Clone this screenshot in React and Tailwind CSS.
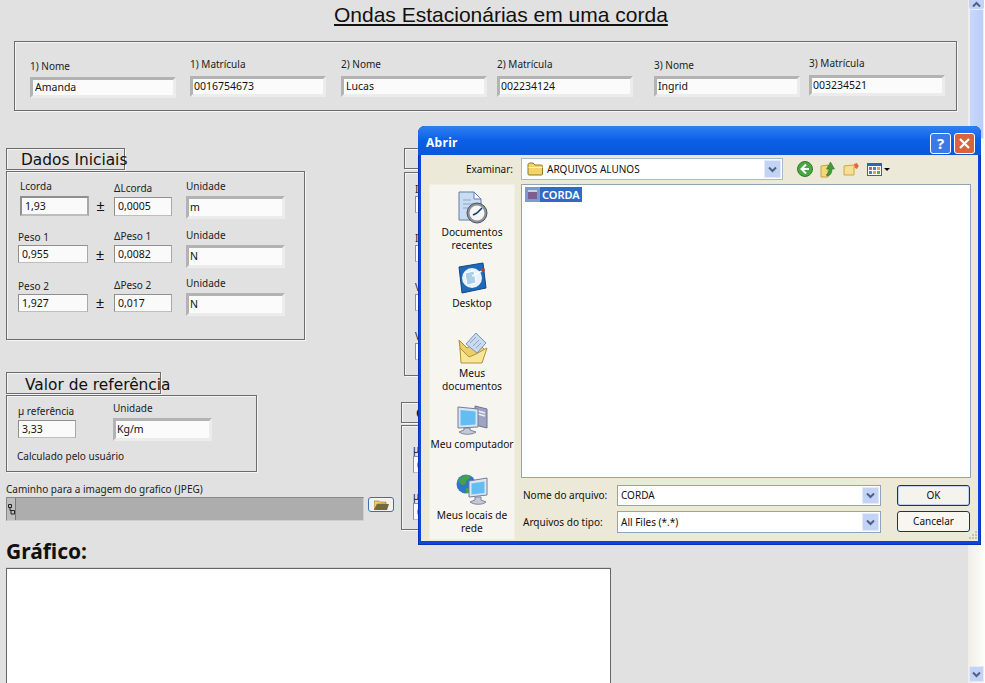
const students = [
  { label: '1) Nome', value: 'Amanda', cls: 'ml-[15px] mt-[17px] w-[146px]', gap: 'mt-[4px]', pad: 'pl-[2px]' },
  { label: '1) Matrícula', value: '0016754673', cls: 'ml-[14px] mt-[15px] w-[136px]', gap: 'mt-[5px]', pad: 'pl-[1px]' },
  { label: '2) Nome', value: 'Lucas', cls: 'ml-[15px] mt-[15px] w-[146px]', gap: 'mt-[5px]', pad: 'pl-[2px]' },
  { label: '2) Matrícula', value: '002234124', cls: 'ml-[10px] mt-[15px] w-[136px]', gap: 'mt-[5px]', pad: 'pl-[1px]' },
  { label: '3) Nome', value: 'Ingrid', cls: 'ml-[21px] mt-[16px] w-[146px]', gap: 'mt-[4px]', pad: 'pl-[1px]' },
  { label: '3) Matrícula', value: '003234521', cls: 'ml-[9px] mt-[14px] w-[136px]', gap: 'mt-[5px]', pad: 'pl-[1px]' },
]

const dados = [
  {
    h: 'h-[56px] pt-[7px]',
    a: { label: 'Lcorda', value: '1,93', cls: 'ml-[2px] w-[69px]', box: 'mt-[3px] h-[20px] border-2 border-[#6f6f6f]' },
    d: { label: 'ΔLcorda', value: '0,0005', cls: 'mt-[2px]', box: 'mt-[2px] h-[19px]' },
    u: { value: 'm', box: 'mt-[3px]' },
    pm: 'mt-[18px] w-[25px]',
  },
  {
    h: 'h-[48px]',
    a: { label: 'Peso 1', value: '0,955', cls: 'mt-[2px] w-[70px]', box: 'mt-px h-[18px]' },
    d: { label: 'ΔPeso 1', value: '0,0082', cls: 'mt-px', box: 'mt-[2px] h-[18px]' },
    u: { value: 'N', box: 'mt-[3px]' },
    pm: 'mt-[18px] w-[26px]',
  },
  {
    h: 'h-[48px]',
    a: { label: 'Peso 2', value: '1,927', cls: 'mt-[3px] w-[70px]', box: 'mt-px h-[18px]' },
    d: { label: 'ΔPeso 2', value: '0,017', cls: 'mt-[2px]', box: 'mt-[2px] h-[18px]' },
    u: { value: 'N', box: 'mt-[3px]' },
    pm: 'mt-[18px] w-[26px]',
  },
]

const places = [
  { icon: <RecentIcon />, lines: ['Documentos', 'recentes'] },
  { icon: <DesktopIcon />, lines: ['Desktop'] },
  { icon: <DocsIcon />, lines: ['Meus', 'documentos'] },
  { icon: <ComputerIcon />, lines: ['Meu computador'] },
  { icon: <NetworkIcon />, lines: ['Meus locais de', 'rede'] },
]

const panel = 'border border-[#6c6c6c] shadow-[inset_1px_1px_0_#f4f4f4,1px_1px_0_#f6f6f6]'
const numeric = 'flex items-center border border-[#8f8f8f] border-b-[#bdbdbd] border-r-[#a8a8a8] bg-[#fafafa] pl-[3px] pt-px text-[10.5px] text-[#111]'
const inset = 'flex items-center border-[3px] border-t-[#b3b3b3] border-l-[#b3b3b3] border-b-[#ececec] border-r-[#ececec] bg-[#fbfbfb] pl-[1px] text-[10.5px] text-[#111]'

function RecentIcon() {
  return (
    <svg width="33" height="33" viewBox="0 0 33 33">
      <path d="M3 1h15l7 7v21H3z" fill="#c9dcf2" stroke="#5e7fa8" />
      <path d="M18 1v7h7z" fill="#fff" stroke="#5e7fa8" />
      <path d="M7 9h8M7 13h12M7 17h8" stroke="#8ba6cb" />
      <circle cx="21" cy="22" r="10" fill="#8b9199" stroke="#4f5660" />
      <circle cx="21" cy="22" r="7.5" fill="#f5f7f2" />
      <path d="M21 22l5-5M21 22l-4 2" stroke="#1d3a70" strokeWidth="1.6" />
    </svg>
  )
}

function DesktopIcon() {
  return (
    <svg width="33" height="33" viewBox="0 0 33 33">
      <path d="M3 5L27 1l3 25-24 5z" fill="#1f69b8" stroke="#13477f" />
      <circle cx="16" cy="16" r="10" fill="#e9f3fb" />
      <path d="M9 11l9-2 2 12-9 2z" fill="#a9cdea" stroke="#fff" />
      <path d="M16 14l10-5" stroke="#f7fbff" strokeWidth="1.5" />
      <circle cx="27" cy="8" r="2" fill="#b0472c" />
    </svg>
  )
}

function DocsIcon() {
  return (
    <svg width="33" height="33" viewBox="0 0 33 33">
      <path d="M3 8l3 22h20l3-12-8-8-10 6z" fill="#eccf6b" stroke="#a98a35" />
      <path d="M10 12L20 1l10 10-9 10z" fill="#c9daf0" stroke="#7b93b7" />
      <path d="M14 11l6-6M17 14l6-6M20 16l5-5" stroke="#8ba7cc" />
      <path d="M5 31h21l5-15-11 6-7 3-9-9z" fill="#f8e595" stroke="#b2933d" />
    </svg>
  )
}

function ComputerIcon() {
  return (
    <svg width="33" height="33" viewBox="0 0 33 33">
      <path d="M19 3l12 3v19l-12-3z" fill="#9ea4c0" stroke="#6f7591" />
      <path d="M22 8l7 2M22 11l7 2" stroke="#eef0f7" strokeWidth="1.5" />
      <path d="M2 4l20 2v18L2 25z" fill="#d9e4f2" stroke="#6f7f9d" />
      <path d="M4.500 7l15 1.500v13l-15 1z" fill="#63bdf2" />
      <path d="M8 25v2l-5 2c4 3 13 3 17 0l-6-2v-2z" fill="#c5c9d6" stroke="#7f8498" />
    </svg>
  )
}

function NetworkIcon() {
  return (
    <svg width="33" height="34" viewBox="0 0 33 34">
      <circle cx="10" cy="11" r="9.5" fill="#2f76c9" />
      <path d="M3 6c4-4 9-5 11-3 1 3-3 3-4 6 0 3-3 4-5 2-2-1-3-3-2-5zM10 15c3 0 5 2 3 5h-3z" fill="#45a347" />
      <path d="M13 8l18-3v17l-18 2z" fill="#dbe6f3" stroke="#6f7f9d" />
      <path d="M15.500 10.500l13-2v11.500l-13 1.500z" fill="#63bdf2" />
      <path d="M19 24v3l-5 2c4 3 13 3 16 0l-5-2v-3z" fill="#c5c9d6" stroke="#7f8498" />
    </svg>
  )
}

function FolderIcon() {
  return (
    <svg width="17" height="14" viewBox="0 0 17 14">
      <path d="M1 2.500C1 1.500 2 1 3 1h3l2 2h6c1 0 1.500.5 1.500 1.500V12c0 .7-.5 1-1 1H2c-.6 0-1-.4-1-1z" fill="#f4d36c" stroke="#8f7422" />
      <path d="M1.500 5.500h14" stroke="#fdf2c2" />
    </svg>
  )
}

function Chevron({ color = '#4d6185' }) {
  return (
    <svg width="9" height="7" viewBox="0 0 9 7">
      <path d="M1 1.500l3.500 3.500L8 1.500" fill="none" stroke={color} strokeWidth="2" />
    </svg>
  )
}

function ComboArrow() {
  return (
    <div className="flex w-[17px] items-center justify-center rounded-[2px] bg-[#c3d3f6] shadow-[inset_0_0_0_1px_#e3ebfb]">
      <Chevron />
    </div>
  )
}

function Panel({ title, titleCls, textCls, children, cls }) {
  return (
    <div>
      <div className={`${panel} h-[22px] ${titleCls} whitespace-nowrap text-[15.4px] text-[#111] font-['DejaVu_Sans',sans-serif]`}>
        <span className={textCls}>{title}</span>
      </div>
      <div className={`${panel} ${cls}`}>{children}</div>
    </div>
  )
}

function Labeled({ label, cls, children }) {
  return (
    <div className={cls}>
      <div className="h-[14px] whitespace-nowrap text-[10px] leading-[14px] text-[#222]">{label}</div>
      {children}
    </div>
  )
}

function Scrollbar() {
  return (
    <aside className="flex h-[683px] w-[17px] shrink-0 flex-col bg-gradient-to-r from-[#efeee8] to-[#fdfdfa]">
      <div className="mx-px flex h-[9px] items-end justify-center overflow-hidden rounded-b-[2px] bg-[#c3d3f6]">
        <div className="rotate-180 pt-px"><Chevron /></div>
      </div>
      <div className="mx-px h-[130px] rounded-[2px] bg-gradient-to-r from-[#c9d8fb] to-[#b9cdf9] shadow-[inset_0_0_0_1px_#e6edfd]" />
      <div className="flex-1" />
      <div className="mx-px mb-px flex h-[16px] items-center justify-center rounded-[2px] bg-[#c3d3f6] shadow-[inset_0_0_0_1px_#e3ebfb]">
        <Chevron />
      </div>
    </aside>
  )
}

function Dialog() {
  return (
    <div className="absolute left-[418px] top-[126px] flex h-[419px] w-[563px] flex-col rounded-t-[7px] bg-[#0a46d8] text-[10px] text-[#111] shadow-[inset_0_0_0_1px_#0733b8]">
      {/* Title bar */}
      <div className="flex h-[29px] shrink-0 items-center justify-between rounded-t-[7px] bg-gradient-to-b from-[#2f80f0] via-[#0a5fe8] to-[#0b57d8] pl-[8px] pr-[6px] pt-[5px]">
        <span className="text-[12px] font-bold tracking-[0.3px] text-white">Abrir</span>
        <div className="flex gap-[3px]">
          <div className="flex h-[21px] w-[21px] items-center justify-center rounded-[3px] border border-white bg-[#3d79e6] text-[15px] font-bold leading-none text-white">?</div>
          <div className="flex h-[21px] w-[21px] items-center justify-center rounded-[3px] border border-white bg-[#d9623f]">
            <svg width="13" height="13" viewBox="0 0 13 13"><path d="M2 2l9 9M11 2l-9 9" stroke="#fff" strokeWidth="2.200" /></svg>
          </div>
        </div>
      </div>

      {/* Body */}
      <div className="mx-[3px] mb-[4px] flex flex-1 flex-col bg-[#ece9d8] pl-[8px] pr-[7px] pt-[3px]">
        <div className="flex h-[22px] items-center">
          <div className="w-[85px] pr-[1px] text-right">Examinar:</div>
          <div className="ml-[7px] flex h-[22px] w-[262px] justify-between border border-[#a8b9cd] bg-white p-[1px]">
            <div className="flex items-center gap-[3px] pl-[4px]"><FolderIcon /><span>ARQUIVOS ALUNOS</span></div>
            <ComboArrow />
          </div>
          <div className="ml-[14px] flex items-center gap-[7px]">
            <svg width="16" height="16" viewBox="0 0 16 16">
              <circle cx="8" cy="8" r="7.500" fill="#46a83f" stroke="#2f7d2c" />
              <path d="M9 3.500L4.500 8 9 12.500M5 8h7" fill="none" stroke="#fff" strokeWidth="2" />
            </svg>
            <svg width="16" height="17" viewBox="0 0 16 17">
              <path d="M1 5l7-1v12l-7 0z" fill="#f4d879" stroke="#c5a441" />
              <path d="M8 15c3-1 4-4 4-7h2.500L10.500 1 6.500 8H9c0 2-.5 4-3 6z" fill="#3f9c36" stroke="#256b22" strokeWidth=".5" />
            </svg>
            <svg width="17" height="14" viewBox="0 0 17 14">
              <path d="M1 4l10-1v10H1z" fill="#f6df92" stroke="#c8a84a" />
              <path d="M11 2l3-1 1 2 1 1-1 1-1 2-2-1" fill="#e9623c" />
            </svg>
            <div className="flex items-center gap-[2px]">
              <div className="grid h-[13px] w-[15px] grid-cols-3 gap-px border border-[#2f64b2] border-t-[3px] bg-white p-px">
                <i className="bg-[#d65b5b]" /><i className="bg-[#4c7dd0]" /><i className="bg-[#d2a73c]" />
                <i className="bg-[#4c7dd0]" /><i className="bg-[#d2a73c]" /><i className="bg-[#5aa84f]" />
              </div>
              <div className="h-0 w-0 border-x-[3px] border-t-[3px] border-x-transparent border-t-black" />
            </div>
          </div>
        </div>

        <div className="mt-[4px] flex flex-1">
          {/* Places */}
          <div className="h-[356px] w-[86px] bg-[#f6f5ef] pt-[7px] text-[10.2px] shadow-[inset_0_0_0_1px_#f1efe4]">
            {places.map((p) => (
              <div key={p.lines[0]} className="flex h-[70.5px] flex-col items-center">
                {p.icon}
                <div className="mt-[2px] whitespace-nowrap text-center leading-[13px]">
                  {p.lines.map((l) => <div key={l}>{l}</div>)}
                </div>
              </div>
            ))}
          </div>

          <div className="ml-[6px] flex-1">
            {/* File list */}
            <div className="h-[294px] border border-[#8ea4b8] bg-white pl-[3px] pt-[2px]">
              <div className="flex h-[15px] items-center">
                <div className="flex h-[15px] w-[15px] items-center justify-center bg-[#7c9ad2]">
                  <div className="h-[9px] w-[9px] bg-[#7a5f8f] shadow-[inset_0_2px_0_#c9cfe6]" />
                </div>
                <span className="bg-[#316ac5] px-[2px] text-[11px] font-semibold leading-[15px] text-white">CORDA</span>
              </div>
            </div>

            <div className="relative mt-[7px] flex">
              <div className="w-[96px] shrink-0">
                <div className="flex h-[21px] items-center pl-[2px]">Nome do arquivo:</div>
                <div className="mt-[5px] flex h-[22px] items-center pl-[2px]">Arquivos do tipo:</div>
              </div>
              <div className="w-[264px]">
                <div className="flex h-[21px] justify-between border border-[#8ea4b8] bg-white p-px">
                  <span className="flex items-center pl-[2px]">CORDA</span>
                  <ComboArrow />
                </div>
                <div className="mt-[5px] flex h-[22px] justify-between border border-[#8ea4b8] bg-white p-px">
                  <span className="flex items-center pl-[2px]">All Files (*.*)</span>
                  <ComboArrow />
                </div>
              </div>
              <div className="ml-[16px] w-[73px]">
                <div className="flex h-[21px] items-center justify-center rounded-[3px] border border-[#003c74] bg-[#f4f3ee] shadow-[inset_0_0_0_1px_#c0d2ee]">OK</div>
                <div className="mt-[5px] flex h-[21px] items-center justify-center rounded-[3px] border border-[#003c74] bg-[#f7f6f1]">Cancelar</div>
              </div>
              {/* resize grip */}
              <div className="absolute -right-[6px] top-[46px] grid grid-cols-3 gap-px">
                <i className="h-[2px] w-[2px]" /><i className="h-[2px] w-[2px]" /><i className="h-[2px] w-[2px] bg-[#c5c2b0]" />
                <i className="h-[2px] w-[2px]" /><i className="h-[2px] w-[2px] bg-[#c5c2b0]" /><i className="h-[2px] w-[2px] bg-[#c5c2b0]" />
                <i className="h-[2px] w-[2px] bg-[#c5c2b0]" /><i className="h-[2px] w-[2px] bg-[#c5c2b0]" /><i className="h-[2px] w-[2px] bg-[#c5c2b0]" />
              </div>
            </div>
          </div>
        </div>
      </div>
    </div>
  )
}

export default function App() {
  return (
    <div className="relative flex h-[683px] w-[985px] overflow-hidden bg-[#e1e1e1] font-['Noto_Sans',sans-serif]">
      <main className="w-[968px] shrink-0">
        <div className="h-[41px] pl-[334px] text-[21px] leading-[30px] text-[#111] underline font-['Liberation_Sans',sans-serif]">
          Ondas Estacionárias em uma corda
        </div>

        {/* Alunos */}
        <div className={`${panel} ml-[14px] flex h-[70px] w-[943px] items-start`}>
          {students.map((s) => (
            <Labeled key={s.label} label={s.label} cls={s.cls}>
              <div className={`${inset} ${s.gap} ${s.pad} h-[21px]`}>{s.value}</div>
            </Labeled>
          ))}
        </div>

        <div className="ml-[6px] mt-[37px] flex h-[383px]">
          {/* Coluna esquerda */}
          <div className="w-[395px] shrink-0">
            <Panel title="Dados Iniciais" titleCls="w-[119px] leading-[23px]" textCls="pl-[14px]" cls="mt-px h-[169px] w-[299px]">
              <div className="pl-[11px]">
                {dados.map((r) => (
                  <div key={r.a.label} className={`${r.h} flex items-start`}>
                    <Labeled label={r.a.label} cls={r.a.cls}>
                      <div className={`${numeric} ${r.a.box}`}>{r.a.value}</div>
                    </Labeled>
                    <div className={`${r.pm} pr-[2px] text-center text-[15px] leading-[16px] text-[#111]`}>±</div>
                    <Labeled label={r.d.label} cls={`${r.d.cls} w-[58px]`}>
                      <div className={`${numeric} ${r.d.box}`}>{r.d.value}</div>
                    </Labeled>
                    <Labeled label="Unidade" cls="ml-[14px] w-[99px]">
                      <div className={`${inset} ${r.u.box} h-[23px]`}>{r.u.value}</div>
                    </Labeled>
                  </div>
                ))}
              </div>
            </Panel>

            <div className="mt-[32px]">
              <Panel title="Valor de referência" titleCls="w-[155px] leading-[25px]" textCls="pl-[18px]" cls="mt-[1px] h-[77px] w-[251px] pl-[11px]">
                <div className="flex h-[45px] items-start">
                  <Labeled label="µ referência" cls="mt-[8px] w-[58px]">
                    <div className={`${numeric} mt-[2px] h-[18px]`}>3,33</div>
                  </Labeled>
                  <Labeled label="Unidade" cls="ml-[37px] mt-[5px] w-[99px]">
                    <div className={`${inset} mt-[3px] h-[23px]`}>Kg/m</div>
                  </Labeled>
                </div>
                <div className="-ml-px mt-[8px] text-[10px] leading-[14px] text-[#222]">Calculado pelo usuário</div>
              </Panel>
            </div>

            <div className="mt-[10px] h-[14px] text-[10px] leading-[14px] text-[#222]">Caminho para a imagem do grafico (JPEG)</div>
            <div className="mt-px flex items-start">
              <div className="flex h-[24px] w-[358px] border border-[#8a8a8a] border-b-[#cfcfcf] border-r-[#cfcfcf] bg-[#adadad]">
                <div className="flex w-[9px] items-center justify-center border-r border-[#777] bg-[#bdbdbd]">
                  <svg width="7" height="11" viewBox="0 0 7 11">
                    <path d="M.5.5h3v3h-3zM3 6.500h3.500v3.500H3zM2 3.500v3h1" fill="none" stroke="#222" />
                  </svg>
                </div>
              </div>
              <div className="ml-[4px] flex h-[15px] w-[26px] items-center justify-center rounded-[3px] border border-[#3f6fa8] bg-[#f2f2f2]">
                <svg width="15" height="10" viewBox="0 0 15 10">
                  <path d="M0 1h5l1 1h6v2H3L1 9H0z" fill="#f2d060" stroke="#6e5a1a" strokeWidth=".5" />
                  <path d="M3 4h12l-2 6H0z" fill="#75683c" />
                </svg>
              </div>
            </div>
          </div>

          {/* Coluna direita, quase toda coberta pelo dialogo */}
          <div className="w-[120px] shrink-0 text-[10px] leading-[14px] text-[#222]">
            <div className="ml-[3px]">
              <div className={`${panel} h-[21px] w-[110px]`} />
              <div className={`${panel} mt-[3px] h-[204px] w-[110px] pl-[10px]`}>
                <div className="mt-[9px]">I</div>
                <div className={`${numeric} h-[17px] w-[60px]`} />
                <div className="mt-[18px]">I</div>
                <div className={`${numeric} h-[17px] w-[60px]`} />
                <div className="mt-[18px]">V</div>
                <div className={`${numeric} h-[17px] w-[60px]`} />
                <div className="mt-[18px]">V</div>
                <div className={`${numeric} h-[17px] w-[60px]`} />
              </div>
            </div>
            <div className="mt-[26px]">
              <div className={`${panel} h-[21px] w-[113px] pl-[14px] text-[14px] font-bold leading-[20px] text-[#111]`}>C</div>
              <div className={`${panel} mt-[2px] h-[105px] w-[113px] pl-[11px]`}>
                <div className="mt-[16px]">µ</div>
                <div className={`${numeric} h-[17px] w-[60px]`}>0</div>
                <div className="mt-[16px]">µ</div>
                <div className={`${numeric} h-[17px] w-[60px]`}>0</div>
              </div>
            </div>
          </div>
        </div>

        <div className="ml-[6px] mt-[7px] h-[30px] text-[21px] font-bold leading-[26px] text-[#111]">Gráfico:</div>
        <div className="ml-[6px] h-[200px] w-[605px] border border-[#666] bg-white shadow-[0_-1px_0_#cfcfcf]" />
      </main>

      <Scrollbar />
      <Dialog />
    </div>
  )
}
